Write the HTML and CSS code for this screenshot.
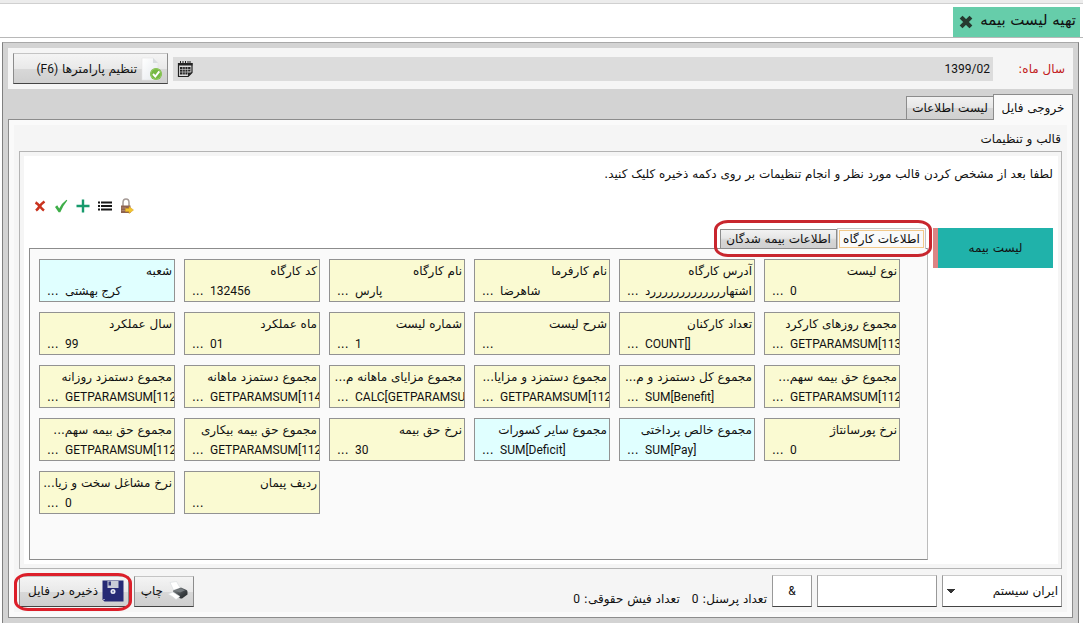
FILE: index.html
```html
<!DOCTYPE html>
<html lang="fa" dir="rtl">
<head>
<meta charset="utf-8">
<meta name="viewport" content="width=device-width, initial-scale=1">
<title>تهیه لیست بیمه</title>
<link rel="stylesheet" href="styles.css">
</head>
<body>
<header class="tabstrip">
  <div class="doc-tab">
    <span>تهیه لیست بیمه</span>
    <button class="icon-btn" type="button" aria-label="بستن">
      <svg width="14" height="14" viewBox="0 0 14 14"><path d="M3.500 3.500l7 7M10.500 3.500l-7 7" stroke="#26392f" stroke-width="4" stroke-linecap="square"/></svg>
    </button>
  </div>
</header>

<main class="frame">
  <section class="filter">
    <label class="filter-label" for="period">سال ماه:</label>
    <div class="period">
      <input id="period" class="period-input" type="text" dir="ltr" value="1399/02">
      <button class="icon-btn" type="button" aria-label="تقویم">
        <svg width="16" height="16" viewBox="0 0 16 16"><path d="M1.500 2.500h13.500v9l-4 4H1.500z" fill="#dcdcdc" stroke="#222" stroke-width="1.200"/><path d="M1 2h14.500v2.500H1z" fill="#222"/><path d="M3.500 0v3M6 0v3M8.500 0v3M11 0v3M13 0v3" stroke="#222"/><path d="M3 6h10.500v4.500h-3v3H3z" fill="#222"/><path d="M3 8.500h10.500M3 11h7.500M5.700 6v8M8.200 6v8M10.700 6v5" stroke="#dcdcdc" stroke-width=".6"/><path d="M11 15.500v-4h4z" fill="#222"/></svg>
      </button>
    </div>
    <button class="btn btn-params" type="button">
      <svg width="22" height="24" viewBox="0 0 22 24"><defs><linearGradient id="sheet" x2="1" y2="1"><stop stop-color="#fff"/><stop offset="1" stop-color="#e6eaee"/></linearGradient></defs><path d="M1 1h11l5 5v17H1z" fill="url(#sheet)" stroke="#e4e4e4" stroke-width=".6"/><path d="M12 1v5h5z" fill="#d9dde0"/><circle cx="15" cy="17" r="6" fill="#76b843"/><circle cx="15" cy="17" r="5.200" fill="none" stroke="#9bd069" stroke-width=".8"/><path d="M12 17l2.300 2.500 4-5.200" fill="none" stroke="#fff" stroke-width="1.900"/></svg>
      <span>تنظیم پارامترها <bdi class="latin" dir="ltr">(F6)</bdi></span>
    </button>
  </section>

  <nav class="tabs">
    <button class="tab tab-active" type="button">خروجی فایل</button>
    <button class="tab" type="button">لیست اطلاعات</button>
  </nav>

  <section class="panel">
    <div class="panel-body">
      <h2 class="group-title">قالب و تنظیمات</h2>
      <div class="group">
        <div class="group-body">
          <p class="hint">لطفا بعد از مشخص کردن قالب مورد نظر و انجام تنظیمات بر روی دکمه ذخیره کلیک کنید.</p>
          <div class="toolbar">
            <button class="icon-btn" type="button" aria-label="حذف"><svg width="12" height="12" viewBox="0 0 12 12"><path d="M1.500 2.500q2 1 4.500 4 2 2.500 4 4M10.500 1.500Q7 4 5.500 6.500 4 9 2 10.500" fill="none" stroke="#c9331f" stroke-width="2.600"/></svg></button>
            <button class="icon-btn" type="button" aria-label="تایید"><svg width="14" height="14" viewBox="0 0 14 14"><path d="M1 8l2.200-1.800 2 3.300Q8 4 12.500.8l.8.700Q8.800 7 6.300 13.300H4.600z" fill="#3fae49"/></svg></button>
            <button class="icon-btn" type="button" aria-label="افزودن"><svg width="14" height="14" viewBox="0 0 14 14"><path d="M7 .5v13M.5 7h13" stroke="#179a6c" stroke-width="2.400"/></svg></button>
            <button class="icon-btn" type="button" aria-label="فهرست"><svg width="14" height="12" viewBox="0 0 14 12"><path d="M3 2.500H14M3 6H14M3 9.500H14M0 2.500h2M0 6h2M0 9.500h2" stroke="#161616" stroke-width="1.900"/></svg></button>
            <button class="icon-btn" type="button" aria-label="قفل"><svg width="14" height="16" viewBox="0 0 14 16"><path d="M3 8V4.500a3 3.500 0 0 1 6 0V8" fill="none" stroke="#a59a96" stroke-width="1.500"/><path d="M1 7.500h9.500V15H1z" fill="#8e6350"/><path d="M1.500 10H6M1.500 12.500H6" stroke="#b58d79" stroke-width=".8"/><path d="M5.500 10.500H9V8.500l4.500 3.500L9 15.500v-2H5.500z" fill="#f2c52f" stroke="#d99d1d" stroke-width=".5"/></svg></button>
          </div>
          <div class="workspace">
            <aside class="side"><button class="side-item" type="button">لیست بیمه</button></aside>
            <div class="editor">
              <nav class="subtabs">
                <button class="subtab subtab-active" type="button"><span>اطلاعات کارگاه</span></button>
                <button class="subtab" type="button">اطلاعات بیمه شدگان</button>
                <i class="mark"></i>
              </nav>
              <div class="cards" dir="ltr">
                <div class="card card-blue"><label for="f1">شعبه</label><div class="row"><button type="button">...</button><input id="f1" value="کرج بهشتی"></div></div>
                <div class="card"><label for="f2">کد کارگاه</label><div class="row"><button type="button">...</button><input id="f2" value="132456"></div></div>
                <div class="card"><label for="f3">نام کارگاه</label><div class="row"><button type="button">...</button><input id="f3" value="پارس"></div></div>
                <div class="card"><label for="f4">نام کارفرما</label><div class="row"><button type="button">...</button><input id="f4" value="شاهرضا"></div></div>
                <div class="card"><label for="f5">آدرس کارگاه</label><div class="row"><button type="button">...</button><input id="f5" value="اشتهارررررررررررررد"></div></div>
                <div class="card"><label for="f6">نوع لیست</label><div class="row"><button type="button">...</button><input id="f6" value="0"></div></div>

                <div class="card"><label for="f7">سال عملکرد</label><div class="row"><button type="button">...</button><input id="f7" value="99"></div></div>
                <div class="card"><label for="f8">ماه عملکرد</label><div class="row"><button type="button">...</button><input id="f8" value="01"></div></div>
                <div class="card"><label for="f9">شماره لیست</label><div class="row"><button type="button">...</button><input id="f9" value="1"></div></div>
                <div class="card"><label for="f10">شرح لیست</label><div class="row"><button type="button">...</button><input id="f10" value=""></div></div>
                <div class="card"><label for="f11">تعداد کارکنان</label><div class="row"><button type="button">...</button><input id="f11" value="COUNT[]"></div></div>
                <div class="card"><label for="f12">مجموع روزهای کارکرد</label><div class="row"><button type="button">...</button><input id="f12" value="GETPARAMSUM[1130]"></div></div>

                <div class="card"><label for="f13">مجموع دستمزد روزانه</label><div class="row"><button type="button">...</button><input id="f13" value="GETPARAMSUM[1120]"></div></div>
                <div class="card"><label for="f14">مجموع دستمزد ماهانه</label><div class="row"><button type="button">...</button><input id="f14" value="GETPARAMSUM[1140]"></div></div>
                <div class="card"><label for="f15">مجموع مزایای ماهانه م...</label><div class="row"><button type="button">...</button><input id="f15" value="CALC[GETPARAMSUM[]]"></div></div>
                <div class="card"><label for="f16">مجموع دستمزد و مزایا...</label><div class="row"><button type="button">...</button><input id="f16" value="GETPARAMSUM[1124]"></div></div>
                <div class="card"><label for="f17">مجموع کل دستمزد و م...</label><div class="row"><button type="button">...</button><input id="f17" value="SUM[Benefit]"></div></div>
                <div class="card"><label for="f18">مجموع حق بیمه سهم...</label><div class="row"><button type="button">...</button><input id="f18" value="GETPARAMSUM[1124]"></div></div>

                <div class="card"><label for="f19">مجموع حق بیمه سهم...</label><div class="row"><button type="button">...</button><input id="f19" value="GETPARAMSUM[1125]"></div></div>
                <div class="card"><label for="f20">مجموع حق بیمه بیکاری</label><div class="row"><button type="button">...</button><input id="f20" value="GETPARAMSUM[1125]"></div></div>
                <div class="card"><label for="f21">نرخ حق بیمه</label><div class="row"><button type="button">...</button><input id="f21" value="30"></div></div>
                <div class="card card-blue"><label for="f22">مجموع سایر کسورات</label><div class="row"><button type="button">...</button><input id="f22" value="SUM[Deficit]"></div></div>
                <div class="card card-blue"><label for="f23">مجموع خالص پرداختی</label><div class="row"><button type="button">...</button><input id="f23" value="SUM[Pay]"></div></div>
                <div class="card"><label for="f24">نرخ پورسانتاژ</label><div class="row"><button type="button">...</button><input id="f24" value="0"></div></div>

                <div class="card"><label for="f25">نرخ مشاغل سخت و زیا...</label><div class="row"><button type="button">...</button><input id="f25" value="0"></div></div>
                <div class="card"><label for="f26">ردیف پیمان</label><div class="row"><button type="button">...</button><input id="f26" value=""></div></div>
              </div>
            </div>
          </div>
        </div>
      </div>

      <footer class="footer">
        <select class="field format" aria-label="قالب"><option>ایران سیستم</option></select>
        <input class="field path" type="text" aria-label="مسیر">
        <input class="field separator" type="text" value="&amp;" aria-label="جداکننده">
        <p class="counts"><span>تعداد پرسنل: <bdi class="latin">0</bdi></span><span>تعداد فیش حقوقی: <bdi class="latin">0</bdi></span></p>
        <button class="btn btn-print" type="button">
          <svg width="22" height="20" viewBox="0 0 22 20"><defs><linearGradient id="printer" x2="1" y2="1"><stop stop-color="#8d9396"/><stop offset=".6" stop-color="#3c4144"/><stop offset="1" stop-color="#202426"/></linearGradient></defs><path d="M3 1.500l6.500-1 4 7-7 1.500z" fill="#fff" stroke="#d5dade" stroke-width=".6"/><path d="M6 9.500l8-3 5.500 2.500q1 .5 1 2v2.500L15 17.500q-1 .3-2-.2L6 13.500z" fill="url(#printer)"/><path d="M7.500 9.800l6.500-2.300 4 1.800-5 2.200z" fill="#777d81"/><path d="M1 13l5-2 7 4.500L9 18.500q-3-3-8-5.500z" fill="#fff" stroke="#d5dade" stroke-width=".6"/></svg>
          <span>چاپ</span>
        </button>
        <button class="btn btn-save" type="button">
          <svg width="22" height="22" viewBox="0 0 22 22"><path d="M.5.500h21v21H2.500L.5 19.500z" fill="#262a75"/><path d="M5.500 1h11v7h-11z" fill="#c9ccd8"/><path d="M6.500 1.500h2.500v4H6.500z" fill="#33387f"/><circle cx="11" cy="11.500" r="2.500" fill="#e9ebf4"/><circle cx="11" cy="11.500" r="1" fill="#6d74ad"/><path d="M1.500 19.500h1" stroke="#fff"/></svg>
          <span>ذخیره در فایل</span>
          <i class="mark"></i>
        </button>
      </footer>
    </div>
  </section>
</main>
</body>
</html>
```
FILE: styles.css
```css
* { box-sizing: border-box; }

body {
  margin: 0;
  min-height: 100vh;
  display: flex;
  flex-direction: column;
  background: #fff;
  color: #111;
  font: 12px/16px "DejaVu Sans", sans-serif;
}

button, input, select { font: inherit; color: inherit; margin: 0; }
button { cursor: pointer; }
p, h2 { margin: 0; }
svg { display: block; flex: none; fill: none; }
.latin { font-family: Roboto, "DejaVu Sans", sans-serif; }

.icon-btn { display: flex; padding: 0; border: 0; background: none; }

.tabstrip {
  display: flex;
  padding: 4px 3px 0;
  border-top: 3px solid #ececec;
  border-bottom: 1px solid #b8b8b8;
  box-shadow: inset 0 1px #d0d0d0;
}
.doc-tab {
  display: flex;
  align-items: center;
  justify-content: space-between;
  width: 127px;
  height: 30px;
  padding: 0 4px 0 6px;
  background: #66cdaa;
  font-size: 15px;
  white-space: nowrap;
}
.doc-tab span { padding-bottom: 4px; }

.frame {
  flex: 1;
  display: flex;
  flex-direction: column;
  margin: 4px 4px 4px 2px;
  padding: 5px;
  border: 1px solid #808080;
  border-top-color: #a8a8a8;
  border-bottom: 0;
  background: #d3d3d3;
}

.filter {
  display: flex;
  align-items: center;
  gap: 5px;
  padding: 5px;
  background: #f5f5f5;
}
.filter-label { width: 70px; padding-right: 3px; color: #c22020; }
.period {
  flex: 1;
  display: flex;
  align-items: center;
  height: 24px;
  padding-left: 4px;
  background: #dcdcdc;
}
.period-input {
  flex: 1;
  min-width: 0;
  border: 0;
  padding: 0 3px;
  background: none;
  text-align: right;
  font-family: Roboto, sans-serif;
}

.btn {
  position: relative;
  display: flex;
  align-items: center;
  gap: 4px;
  height: 31px;
  padding: 0 4px;
  border: 1px solid #8c8c8c;
  border-top-color: #c4c4c4;
  border-bottom-color: #444;
  background: linear-gradient(#f4f4f4, #e9e9e9 50%, #d8d8d8 52%, #cfcfcf);
  white-space: nowrap;
}
.btn-params { width: 155px; }
.btn-print { width: 60px; }
.btn-save { width: 110px; }

.tabs { display: flex; align-items: flex-end; margin: 5px 0 -1px; }
.tab {
  height: 24px;
  width: 88px;
  padding: 0;
  border: 1px solid #8c8c8c;
  background: linear-gradient(#f2f2f2, #e6e6e6 50%, #d6d6d6 52%, #d0d0d0);
  white-space: nowrap;
}
.tab-active {
  position: relative;
  width: 80px;
  height: 26px;
  margin-left: -1px;
  border-bottom: 0;
  background: #fafafa;
}

.panel {
  flex: 1;
  display: flex;
  padding: 5px;
  border: 1px solid #8c8c8c;
  background: #fafafa;
}
.panel-body {
  flex: 1;
  min-width: 0;
  display: flex;
  flex-direction: column;
  padding: 5px;
  background: #f5f5f5;
}
.group-title { padding: 1px 1px 4px; font-size: 12px; font-weight: normal; }
.group {
  flex: 1;
  display: flex;
  margin-bottom: 6px;
  padding: 4px 3px 4px 4px;
  border: 1px solid #b4b4b4;
}
.group-body {
  flex: 1;
  min-width: 0;
  display: flex;
  flex-direction: column;
  padding: 10px 5px 4px;
  background: #fff;
}
.hint { white-space: nowrap; }
.toolbar {
  display: flex;
  flex-direction: row-reverse;
  justify-content: flex-end;
  align-items: center;
  align-self: flex-end;
  gap: 8px;
  padding: 16px 0 14px 5px;
}
.workspace { flex: 1; display: flex; gap: 5px; }
.side { flex: none; width: 120px; }
.side-item {
  width: 100%;
  height: 40px;
  border: 0;
  border-left: 5px solid #dc8484;
  background: #20b2aa;
}
.editor { flex: 1; min-width: 0; display: flex; flex-direction: column; }
.subtabs {
  position: relative;
  align-self: flex-start;
  display: flex;
  align-items: flex-end;
  margin: 0 2px -1px 0;
}
.subtab {
  width: 117px;
  height: 20px;
  padding: 0;
  border: 1px solid #8c8c8c;
  background: linear-gradient(#f2f2f2, #e6e6e6 45%, #d6d6d6 55%, #d0d0d0);
  white-space: nowrap;
}
.subtab-active {
  position: relative;
  width: 89px;
  height: 21px;
  padding: 1px;
  border-color: #c4c4c4;
  border-bottom: 0;
  background: #fafafa;
}
.subtab-active span { display: block; border: 1px solid #f2c98a; }
.mark {
  position: absolute;
  inset: -8px -6px;
  border: 3px solid #c8262e;
  border-radius: 14px / 10px;
  pointer-events: none;
}
.btn-save .mark { inset: -4px -4px -5px -6px; border-color: #dc1f2a; }

.cards {
  flex: 1;
  display: grid;
  grid-template-columns: repeat(6, 136px);
  align-content: start;
  gap: 10px 9px;
  padding: 10px 9px;
  border: 1px solid #8c8c8c;
  border-right-color: #bcbcbc;
  background: #fafafa;
}
.card {
  height: 43px;
  padding: 2px 0 0;
  border: 1px solid #929292;
  background: #fafad2;
  overflow: hidden;
}
.card-blue { background: #e0ffff; }
.card label {
  display: block;
  height: 18px;
  padding: 0 2px;
  line-height: 18px;
  direction: rtl;
  white-space: nowrap;
}
.row { display: flex; align-items: center; height: 21px; }
.row button {
  flex: none;
  width: 25px;
  padding: 0 0 0 7px;
  border: 0;
  background: none;
  text-align: left;
}
.row input {
  flex: 1;
  min-width: 0;
  padding: 0;
  border: 0;
  background: none;
  font-family: Roboto, "DejaVu Sans", sans-serif;
}

.footer { display: flex; align-items: center; gap: 5px; }
.field {
  width: 120px;
  height: 32px;
  padding: 0 3px;
  border: 1px solid #999;
  border-top-color: #c8c8c8;
  border-bottom-color: #444;
  border-radius: 0;
  background: #fff;
}
.format {
  appearance: none;
  background:
    linear-gradient(45deg, transparent 50%, #333 50%) 4px 13px / 4px 4px no-repeat,
    linear-gradient(-45deg, transparent 50%, #333 50%) 8px 13px / 4px 4px no-repeat,
    #fff;
}
.separator { width: 40px; text-align: center; font-family: Roboto, sans-serif; }
.counts { flex: 1; display: flex; align-self: flex-end; gap: 12px; white-space: nowrap; }
```
